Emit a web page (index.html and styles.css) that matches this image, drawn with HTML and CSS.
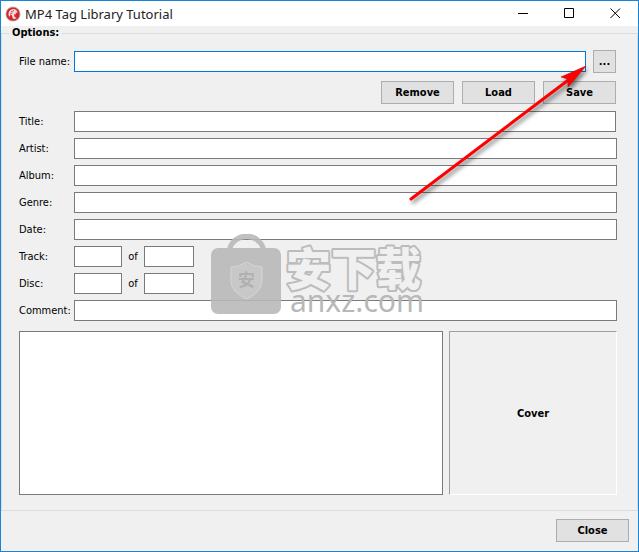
FILE: index.html
```html
<!DOCTYPE html>
<html lang="en">
<head>
    <meta charset="UTF-8">
    <title>MP4 Tag Library Tutorial</title>
    <link rel="stylesheet" href="styles.css">
</head>
<body>
    <div class="window">
        <div class="titlebar">
            <svg class="logo" width="16" height="16" viewBox="0 0 16 16">
                <circle cx="8" cy="8" r="7.5" fill="#b9a9a9"/>
                <circle cx="8" cy="8" r="6.6" fill="#d8242c"/>
                <path d="M3.500 9Q3 4 8 3Q12 3 12.500 7L10.500 6.500L11 8.500L9 8L9.500 10.500L11.500 12.500L8.500 13Q7 11.500 7 9.500L5.500 8.500L4.500 11Z" fill="#f6dcdc"/>
                <path d="M6 6L9 4.500M5 8L7.500 7" stroke="#d8242c" stroke-width=".8"/>
            </svg>
            <h1 class="title">MP4 Tag Library Tutorial</h1>
            <button type="button" class="ctrl" aria-label="Minimize">
                <svg width="11" height="11"><path d="M0 5.5H10" stroke="#000"/></svg>
            </button>
            <button type="button" class="ctrl" aria-label="Maximize">
                <svg width="11" height="11"><path d="M.5 .5H9.5V9.5H.5Z" fill="none" stroke="#000"/></svg>
            </button>
            <button type="button" class="ctrl" aria-label="Close window">
                <svg width="11" height="11"><path d="M.5 .5L10 10M10 .5L.5 10" stroke="#000"/></svg>
            </button>
        </div>
        <fieldset class="options">
            <legend>Options:</legend>
            <div class="top">
                <div class="row file">
                    <label for="file">File name:</label>
                    <input type="text" id="file" class="current">
                    <button type="button" class="btn browse">...</button>
                </div>
                <div class="actions">
                    <button type="button" class="btn">Remove</button>
                    <button type="button" class="btn">Load</button>
                    <button type="button" class="btn">Save</button>
                </div>
                <div class="row">
                    <label for="title">Title:</label>
                    <input type="text" id="title">
                </div>
            </div>
            <div class="fields">
                <div class="row">
                    <label for="artist">Artist:</label>
                    <input type="text" id="artist">
                </div>
                <div class="row">
                    <label for="album">Album:</label>
                    <input type="text" id="album">
                </div>
                <div class="row">
                    <label for="genre">Genre:</label>
                    <input type="text" id="genre">
                </div>
                <div class="row">
                    <label for="date">Date:</label>
                    <input type="text" id="date">
                </div>
                <div class="row pair">
                    <label for="track">Track:</label>
                    <input type="text" id="track">
                    <label for="tracks" class="of">of</label>
                    <input type="text" id="tracks" class="total">
                </div>
                <div class="row pair">
                    <label for="disc">Disc:</label>
                    <input type="text" id="disc">
                    <label for="discs" class="of">of</label>
                    <input type="text" id="discs" class="total">
                </div>
                <div class="row">
                    <label for="comment">Comment:</label>
                    <input type="text" id="comment">
                </div>
            </div>
            <div class="bottom">
                <textarea class="tags" aria-label="Tags"></textarea>
                <div class="cover">Cover</div>
            </div>
        </fieldset>
        <div class="footer">
            <button type="button" class="btn">Close</button>
        </div>

        <!-- watermark -->
        <svg class="mark" width="220" height="90" viewBox="0 0 220 90">
            <g opacity=".88">
                <path d="M16 15A20 20 0 0 1 55 15H50A15.500 15.500 0 0 0 21 15Z" fill="#b8b8b8"/>
                <rect x="0" y="14" width="70" height="66" rx="7" fill="#b8b8b8"/>
                <path d="M35.500 28Q43 33 51 33V47Q51 58 35.500 65Q20 58 20 47V33Q28 33 35.500 28Z" fill="#c3c3c3" stroke="#d2d2d2"/>
                <text x="27" y="52" class="seal">安</text>
            </g>
            <text x="75" y="52" class="name">安下载</text>
            <text x="79" y="78" class="site">anxz.com</text>
        </svg>
        <!-- pointer to the browse button -->
        <svg class="arrow" width="190" height="146" viewBox="0 0 190 146">
            <path d="M6 137L166 16" stroke="#f00" stroke-width="3" stroke-linecap="round"/>
            <path d="M181 4L156 15L163 17L163 25Z" fill="#f00" stroke="#c00" stroke-width=".6"/>
        </svg>
    </div>
</body>
</html>
```
FILE: styles.css
```css
* {
    box-sizing: border-box;
}
body,h1,fieldset {
    margin: 0;
    padding: 0;
}
body,button,input,textarea {
    font-family: "DejaVu Sans Condensed", "DejaVu Sans", sans-serif;
    font-size: 11px;
    color: #000;
}
.window {
    position: relative;
    display: flex;
    flex-direction: column;
    min-height: 100vh;
    border: 1px solid #1883d7;
    background: #f0f0f0;
}
.titlebar {
    display: flex;
    align-items: center;
    height: 25px;
    padding-left: 4px;
    background: #fff;
}
.title {
    flex: 1;
    margin-left: 4px;
    font-family: "Noto Sans", sans-serif;
    font-size: 13px;
    font-weight: normal;
    color: #222;
}
.ctrl {
    width: 46px;
    height: 25px;
    padding: 0;
    border: 0;
    background: none;
}
.ctrl svg {
    display: block;
    margin: 0 auto;
}
.options {
    flex: 1;
    min-width: 0;
    padding: 10px 20px 15px 17px;
    border: 1px solid #dcdcdc;
}
legend {
    margin-left: -10px;
    padding: 0 3px;
    line-height: 14px;
    font-weight: bold;
}
.top {
    padding-right: 1px;
}
.row {
    display: grid;
    grid-template-columns: 55px 1fr;
    align-items: center;
}
.file {
    grid-template-columns: 55px 1fr 30px;
}
.pair {
    grid-template-columns: 55px 48px 22px 50px;
}
input {
    width: 100%;
    height: 21px;
    padding: 0 3px;
    border: 1px solid #7a7a7a;
    background: #fff;
}
.current {
    border-color: #0078d7;
}
.of {
    text-align: center;
}
.btn {
    width: 73px;
    height: 23px;
    padding: 0;
    border: 1px solid #adadad;
    background: #e1e1e1;
    font-weight: bold;
}
.browse {
    width: 23px;
    margin-left: 7px;
}
.actions {
    display: flex;
    justify-content: flex-end;
    gap: 8px;
    margin: 8px 0 7px;
}
.fields {
    display: grid;
    gap: 6px;
    margin-top: 6px;
}
.bottom {
    display: grid;
    grid-template-columns: 1fr 168px;
    gap: 6px;
    margin-top: 10px;
}
.tags {
    display: block;
    width: 100%;
    height: 164px;
    border: 1px solid #7a7a7a;
    background: #fff;
    resize: none;
}
.cover {
    display: flex;
    align-items: center;
    justify-content: center;
    border: 1px solid;
    border-color: #a0a0a0 #fff #fff #a0a0a0;
    font-weight: bold;
}
.footer {
    display: flex;
    justify-content: flex-end;
    padding: 8px 9px 9px;
}
.mark,.arrow {
    position: absolute;
    pointer-events: none;
}
.mark {
    left: 210px;
    top: 233px;
}
.seal {
    font: bold 17px "Noto Sans CJK SC", sans-serif;
    fill: #a8a8a8;
}
.name {
    font: 900 45px "Noto Sans CJK SC", sans-serif;
    fill: #f0f0f0;
    stroke: #bcbcbc;
    stroke-width: 4px;
    stroke-linejoin: round;
    paint-order: stroke;
}
.site {
    font: 30px "Noto Sans", sans-serif;
    fill: #b8b8b8;
}
.arrow {
    left: 404px;
    top: 61px;
    filter: drop-shadow(2px 3px 2px rgba(0,0,0,0.5));
}
```
